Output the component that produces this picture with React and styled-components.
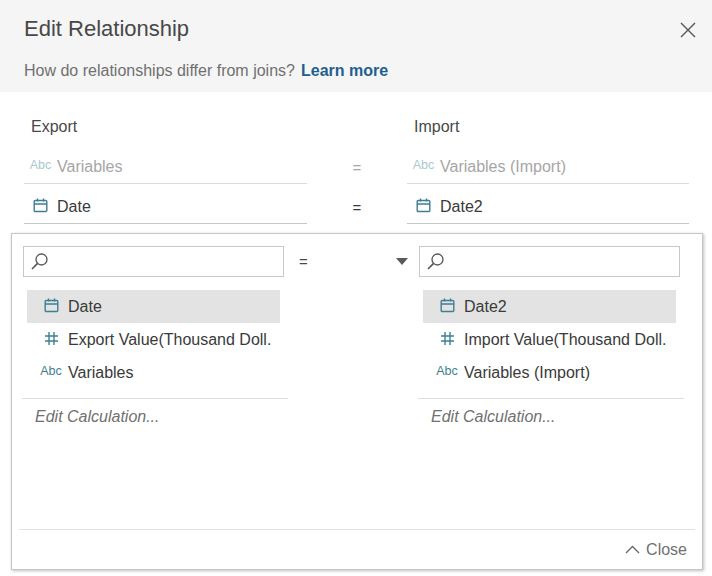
import React from 'react';
import styled, { createGlobalStyle } from 'styled-components';

const GlobalStyle = createGlobalStyle`
  html, body {
    margin: 0;
    padding: 0;
    background: #fff;
  }
  body {
    font-family: "Liberation Sans", Arial, sans-serif;
  }
`;

const Dialog = styled.div`
  width: 712px;
  height: 576px;
  overflow: hidden;
  background: #fff;
  display: flex;
  flex-direction: column;
`;

const Header = styled.header`
  height: 92px;
  box-sizing: border-box;
  flex: none;
  background: #f5f5f5;
  padding: 16px 16px 0 24px;
`;

const TitleRow = styled.div`
  display: flex;
  justify-content: space-between;
  align-items: center;
  height: 26px;
`;

const Title = styled.h1`
  margin: 0;
  font-size: 22px;
  font-weight: 400;
  color: #484848;
`;

const CloseX = styled.svg`
  width: 16px;
  height: 16px;
  margin-top: 1px;
  fill: none;
  stroke: #555;
  stroke-width: 1.4;
`;

const Hint = styled.p`
  margin: 18px 0 0;
  font-size: 16px;
  line-height: 22px;
  color: #707070;
`;

const LearnMore = styled.a`
  margin-left: 6px;
  font-weight: 700;
  color: #1f5f8f;
`;

const Summary = styled.section`
  flex: none;
  height: 141px;
  box-sizing: border-box;
  padding: 24px 23px 0 24px;
  display: grid;
  grid-template-columns: 283px 100px 282px;
  grid-template-rows: 30px 38px 40px;
  align-items: stretch;
`;

const SideLabel = styled.div`
  padding-left: 7px;
  font-size: 16px;
  line-height: 22px;
  color: #484848;
`;

const FieldRow = styled.div`
  display: flex;
  align-items: center;
  padding-top: ${(p) => (p.$muted ? '4px' : '6px')};
  border-bottom: 1px solid ${(p) => (p.$muted ? '#dcdcdc' : '#c8c8c8')};
  font-size: 16px;
  color: ${(p) => (p.$muted ? '#a6a6a6' : '#3a3a3a')};
`;

const IconSlot = styled.span`
  width: 33px;
  flex: none;
  display: flex;
  justify-content: center;
  color: ${(p) => (p.$muted ? '#a9c8d2' : '#3d7f93')};
`;

const EqualSign = styled.div`
  display: flex;
  align-items: center;
  justify-content: center;
  padding-top: ${(p) => (p.$muted ? '4px' : '6px')};
  font-size: 15px;
  color: ${(p) => (p.$muted ? '#a6a6a6' : '#3a3a3a')};
`;

const Panel = styled.section`
  flex: none;
  width: 692px;
  height: 337px;
  margin-left: 11px;
  box-sizing: border-box;
  border: 1px solid #c6c6c6;
  box-shadow: 1px 1px 3px rgba(0, 0, 0, 0.25);
  display: flex;
  flex-direction: column;
`;

const Columns = styled.div`
  flex: 1;
  padding: 12px 0 0 11px;
  display: grid;
  grid-template-columns: 261px 135px 261px;
  align-items: start;
`;

const Column = styled.div`
  display: flex;
  flex-direction: column;
`;

const SearchBox = styled.div`
  height: 31px;
  box-sizing: border-box;
  border: 1px solid #c8c8c8;
  display: flex;
  align-items: center;
  padding-left: 7px;
`;

const SearchIcon = styled.svg`
  width: 17px;
  height: 17px;
  fill: none;
  stroke: #555;
  stroke-width: 1.3;
`;

const OperatorCell = styled.div`
  height: 31px;
  display: flex;
  align-items: center;
  justify-content: space-between;
  padding: 0 11px 0 15px;
  font-size: 15px;
  color: #484848;
`;

const Triangle = styled.span`
  width: 0;
  height: 0;
  border-left: 6px solid transparent;
  border-right: 6px solid transparent;
  border-top: 7px solid #5a5a5a;
`;

const FieldList = styled.ul`
  list-style: none;
  margin: 13px 0 0;
  padding: 0 4px;
`;

const FieldItem = styled.li`
  height: 33px;
  display: flex;
  align-items: center;
  background: ${(p) => (p.$selected ? '#e3e3e3' : 'transparent')};
  font-size: 16px;
  color: #3a3a3a;
  white-space: nowrap;
`;

const ItemIcon = styled.span`
  width: 41px;
  box-sizing: border-box;
  padding-left: 7px;
  flex: none;
  display: flex;
  justify-content: center;
  color: #3d7f93;
`;

const EditCalc = styled.div`
  margin: 9px -8px 0 -5px;
  border-top: 1px solid #dedede;
  padding: 8px 0 0 13px;
  font-size: 16px;
  line-height: 20px;
  font-style: italic;
  color: #707070;
`;

const Footer = styled.footer`
  flex: none;
  height: 39px;
  margin: 0 7px;
  border-top: 1px solid #e2e2e2;
  display: flex;
  justify-content: flex-end;
  align-items: center;
  gap: 6px;
  padding-right: 8px;
  font-size: 16px;
  color: #707070;
`;

const Chevron = styled.svg`
  width: 15px;
  height: 9px;
  fill: none;
  stroke: #666;
  stroke-width: 1.3;
`;

const AbcGlyph = styled.span`
  font-size: 12.5px;
  line-height: 14px;
  margin-top: -3px;
  white-space: nowrap;
`;

const Glyph = styled.svg`
  width: 15px;
  height: 15px;
  margin-top: -2px;
  fill: none;
  stroke: currentColor;
  stroke-width: 1.4;
`;

const CalendarIcon = () => (
  <Glyph viewBox="0 0 15 15">
    <rect x="1.2" y="2.5" width="12.6" height="11" rx="1" />
    <path d="M1 6h13M4.5 0.5v3M10.5 0.5v3" />
  </Glyph>
);

const HashIcon = () => (
  <Glyph viewBox="0 0 15 15">
    <path d="M5 1v13M10 1v13M1 5h13M1 10h13" />
  </Glyph>
);

const Abc = () => <AbcGlyph>Abc</AbcGlyph>;

const SearchField = () => (
  <SearchBox>
    <SearchIcon viewBox="0 0 17 17">
      <circle cx="10.5" cy="6.5" r="5.5" />
      <path d="M6.6 10.4L1 16" strokeWidth="1.6" />
    </SearchIcon>
  </SearchBox>
);

const FieldColumn = ({ fields }) => (
  <Column>
    <SearchField />
    <FieldList>
      {fields.map((f) => (
        <FieldItem key={f.name} $selected={f.selected}>
          <ItemIcon>{f.icon}</ItemIcon>
          {f.name}
        </FieldItem>
      ))}
      <EditCalc>Edit Calculation...</EditCalc>
    </FieldList>
  </Column>
);

const exportFields = [
  { name: 'Date', icon: <CalendarIcon />, selected: true },
  { name: 'Export Value(Thousand Doll.', icon: <HashIcon /> },
  { name: 'Variables', icon: <Abc /> },
];

const importFields = [
  { name: 'Date2', icon: <CalendarIcon />, selected: true },
  { name: 'Import Value(Thousand Doll.', icon: <HashIcon /> },
  { name: 'Variables (Import)', icon: <Abc /> },
];

export default function App() {
  return (
    <Dialog>
      <GlobalStyle />
      <Header>
        <TitleRow>
          <Title>Edit Relationship</Title>
          <CloseX viewBox="0 0 16 16">
            <path d="M1 1l14 14M15 1L1 15" />
          </CloseX>
        </TitleRow>
        <Hint>
          How do relationships differ from joins?
          <LearnMore>Learn more</LearnMore>
        </Hint>
      </Header>

      <Summary>
        <SideLabel>Export</SideLabel>
        <div />
        <SideLabel>Import</SideLabel>

        <FieldRow $muted>
          <IconSlot $muted><Abc /></IconSlot>
          Variables
        </FieldRow>
        <EqualSign $muted>=</EqualSign>
        <FieldRow $muted>
          <IconSlot $muted><Abc /></IconSlot>
          Variables (Import)
        </FieldRow>

        <FieldRow>
          <IconSlot><CalendarIcon /></IconSlot>
          Date
        </FieldRow>
        <EqualSign>=</EqualSign>
        <FieldRow>
          <IconSlot><CalendarIcon /></IconSlot>
          Date2
        </FieldRow>
      </Summary>

      <Panel>
        <Columns>
          <FieldColumn fields={exportFields} />
          <OperatorCell>
            <span>=</span>
            <Triangle />
          </OperatorCell>
          <FieldColumn fields={importFields} />
        </Columns>
        <Footer>
          <Chevron viewBox="0 0 15 9">
            <path d="M1 8l6.5-6.5L14 8" />
          </Chevron>
          Close
        </Footer>
      </Panel>
    </Dialog>
  );
}
